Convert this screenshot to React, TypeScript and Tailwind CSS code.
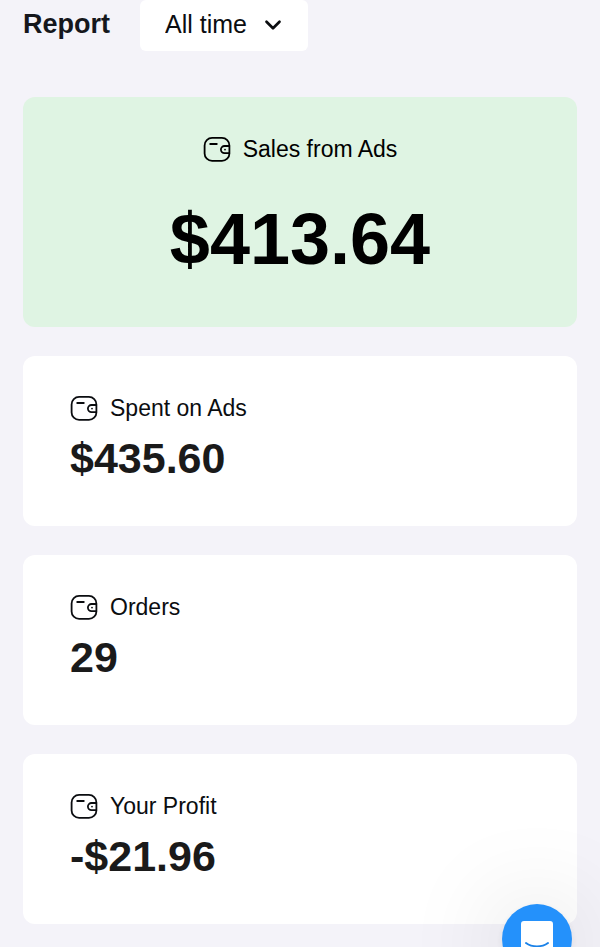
import { useState } from 'react';
import { ChevronDown } from 'lucide-react';

const stats = [
  { label: 'Spent on Ads', value: '$435.60' },
  { label: 'Orders', value: '29' },
  { label: 'Your Profit', value: '-$21.96' },
];

function WalletIcon() {
  return (
    <svg
      viewBox="0 0 28 26"
      className="h-[26px] w-7 shrink-0"
      fill="none"
      stroke="currentColor"
      strokeWidth="1.8"
      strokeLinecap="round"
      strokeLinejoin="round"
      aria-hidden="true"
    >
      <rect x="1.6" y="1.9" width="24.8" height="23" rx="7.5" />
      <path d="M7.2 8h6.6" />
      <path d="M26.2 10h-4.7a3.6 3.6 0 0 0 0 7.2h4.7" />
      <circle cx="22" cy="13.6" r="0.9" fill="currentColor" stroke="none" />
    </svg>
  );
}

function CardLabel({ children }: { children: string }) {
  return (
    <div className="flex items-center gap-3">
      <WalletIcon />
      <h2 className="text-[23px] leading-7">{children}</h2>
    </div>
  );
}

export default function App() {
  const [period, setPeriod] = useState('all');

  return (
    <div className="min-h-screen bg-[#f4f3f9] px-[23px] pb-[23px] font-['Liberation_Sans',Arial,sans-serif] text-[#0b0d10]">
      <header className="mb-[46px] flex items-center gap-[30px]">
        <h1 className="pb-[3px] text-[27px] leading-8 font-bold text-[#15171c]">Report</h1>
        <div className="relative">
          <select
            value={period}
            onChange={(e) => setPeriod(e.target.value)}
            aria-label="Report period"
            className="h-[51px] w-[168px] appearance-none rounded-md bg-white pr-12 pb-px pl-[25px] text-[25px]"
          >
            <option value="all">All time</option>
            <option value="30d">Last 30 days</option>
            <option value="7d">Last 7 days</option>
          </select>
          <ChevronDown
            className="pointer-events-none absolute top-3 right-[22px] size-[26px]"
            strokeWidth={2.5}
          />
        </div>
      </header>

      <main className="flex flex-col gap-[29px]">
        {/* Headline figure */}
        <section className="flex flex-col items-center rounded-xl bg-[#dff4e3] pt-[38px] pb-12 text-black">
          <CardLabel>Sales from Ads</CardLabel>
          <p className="mt-9 text-[72px] leading-20 font-bold">$413.64</p>
        </section>

        {stats.map((stat) => (
          <section key={stat.label} className="rounded-xl bg-white px-[47px] pt-[38px] pb-[42px]">
            <CardLabel>{stat.label}</CardLabel>
            <p className="mt-2.5 text-[43px] leading-[52px] font-bold text-[#1a1a1a]">{stat.value}</p>
          </section>
        ))}
      </main>

      {/* Chat launcher */}
      <button
        type="button"
        aria-label="Open chat"
        className="fixed right-[28px] bottom-[-27px] flex size-[70px] items-center justify-center rounded-full bg-[#2491fb] shadow-[0_2px_10px_rgba(0,0,0,0.06),0_4px_100px_rgba(0,0,0,0.18)]"
      >
        <svg viewBox="0 0 32 36" className="h-9 w-8" fill="none" aria-hidden="true">
          <path d="M3 0h26a3 3 0 0 1 3 3v33l-7-4H3a3 3 0 0 1-3-3V3a3 3 0 0 1 3-3z" fill="#fff" />
          <path d="M5 22c6 4.5 16 4.5 22 0" stroke="#1b82e8" strokeWidth="2" strokeLinecap="round" />
        </svg>
      </button>
    </div>
  );
}
